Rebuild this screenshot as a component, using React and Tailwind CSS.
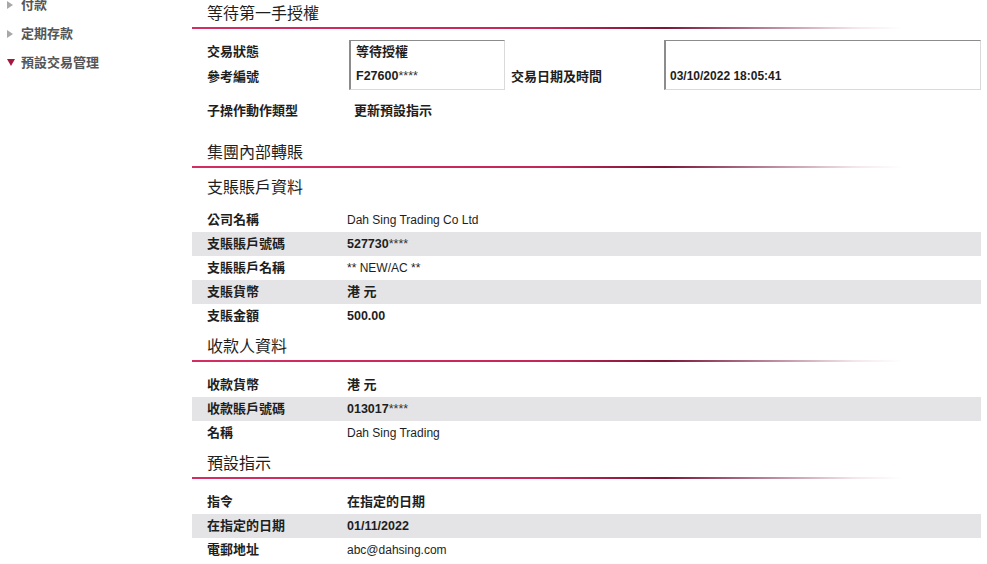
import React from "react";

const FONT = "font-['Liberation_Sans','Noto_Sans_CJK_TC',sans-serif]";

function SideItem({ label, open }) {
  return (
    <div className="flex h-[29px] items-center">
      <div className="flex w-[21px] justify-center pl-[1px]">
        {open ? (
          <span className="h-0 w-0 border-x-[4px] border-t-[7px] border-x-transparent border-t-[#a3173f]" />
        ) : (
          <span className="ml-[-3px] h-0 w-0 border-y-[4px] border-l-[6px] border-y-transparent border-l-[#a8a8a8]" />
        )}
      </div>
      <span className="text-[13px] font-bold text-[#555555]">{label}</span>
    </div>
  );
}

function Rule() {
  return (
    <div className="h-[2px] w-full bg-[linear-gradient(to_right,#d22e62_0%,#c5265a_45%,#7c1636_60%,#a86a82_70%,#f3e6ea_84%,rgba(255,255,255,0)_90%)]" />
  );
}

function Header({ children }) {
  return (
    <div>
      <div className="flex h-[27px] items-center pl-[15px] text-[16px] text-[#1e1e1e]">{children}</div>
      <Rule />
    </div>
  );
}

function Row({ label, value, grey, bold }) {
  return (
    <div className={grey ? "flex h-[24px] items-center bg-[#e4e4e6]" : "flex h-[24px] items-center"}>
      <div className="w-[155px] shrink-0 pl-[15px] text-[13px] font-bold text-[#1e1e1e]">{label}</div>
      <div className={bold ? "text-[12.5px] font-bold text-[#1e1e1e]" : "text-[12px] text-[#1e1e1e]"}>{value}</div>
    </div>
  );
}

function Masked({ head }) {
  return (
    <span>
      {head}
      <span className="font-normal text-[#333]">****</span>
    </span>
  );
}

export default function App() {
  return (
    <div className={`flex h-[564px] w-[987px] overflow-hidden bg-white ${FONT}`}>
      <aside className="w-[192px] shrink-0">
        <div className="mt-[-10px] flex flex-col">
          <SideItem label="付款" />
          <SideItem label="定期存款" />
          <SideItem label="預設交易管理" open />
        </div>
      </aside>

      <main className="w-[789px] shrink-0">
        <Header>等待第一手授權</Header>

        <div className="mt-[11px] flex">
          <div className="flex w-[157px] shrink-0 flex-col pl-[15px] text-[13px] font-bold text-[#1e1e1e]">
            <div className="flex h-[23px] items-center">交易狀態</div>
            <div className="flex h-[27px] items-center">參考編號</div>
          </div>
          <div className="flex w-[156px] shrink-0 flex-col border-b border-l-2 border-r border-t border-b-[#dadada] border-l-[#8c8c8c] border-r-[#dadada] border-t-[#8c8c8c] pl-[5px] text-[#1e1e1e]">
            <div className="flex h-[22px] items-center text-[13px] font-bold">等待授權</div>
            <div className="flex h-[26px] items-center text-[12.5px] font-bold">
              <Masked head="F27600" />
            </div>
          </div>
          <div className="flex w-[159px] shrink-0 flex-col pl-[6px] text-[13px] font-bold text-[#1e1e1e]">
            <div className="h-[23px]" />
            <div className="flex h-[27px] items-center">交易日期及時間</div>
          </div>
          <div className="flex w-[317px] shrink-0 flex-col border-b border-l-2 border-r border-t border-b-[#dadada] border-l-[#8c8c8c] border-r-[#dadada] border-t-[#8c8c8c] pl-[4px] text-[#1e1e1e]">
            <div className="h-[22px]" />
            <div className="flex h-[26px] items-center text-[12px] font-bold">03/10/2022 18:05:41</div>
          </div>
        </div>

        <div className="mt-[9px] flex h-[24px] items-center">
          <div className="w-[162px] shrink-0 pl-[15px] text-[13px] font-bold text-[#1e1e1e]">子操作動作類型</div>
          <div className="text-[13px] font-bold text-[#1e1e1e]">更新預設指示</div>
        </div>

        <div className="mt-[16px]">
          <Header>集團內部轉賬</Header>
        </div>

        <div className="flex h-[40px] items-center pl-[15px] text-[16px] text-[#1e1e1e]">支賬賬戶資料</div>

        <div className="flex flex-col">
          <Row label="公司名稱" value="Dah Sing Trading Co Ltd" />
          <Row label="支賬賬戶號碼" value={<Masked head="527730" />} grey bold />
          <Row label="支賬賬戶名稱" value="** NEW/AC **" />
          <Row label="支賬貨幣" value={<span className="text-[13px]">港 元</span>} grey bold />
          <Row label="支賬金額" value="500.00" bold />
        </div>

        <div className="mt-[5px]">
          <Header>收款人資料</Header>
        </div>

        <div className="mt-[11px] flex flex-col">
          <Row label="收款貨幣" value={<span className="text-[13px]">港 元</span>} bold />
          <Row label="收款賬戶號碼" value={<Masked head="013017" />} grey bold />
          <Row label="名稱" value="Dah Sing Trading" />
        </div>

        <div className="mt-[5px]">
          <Header>預設指示</Header>
        </div>

        <div className="mt-[11px] flex flex-col">
          <Row label="指令" value={<span className="text-[13px]">在指定的日期</span>} bold />
          <Row label="在指定的日期" value="01/11/2022" grey bold />
          <Row label="電郵地址" value="abc@dahsing.com" />
        </div>
      </main>
    </div>
  );
}
